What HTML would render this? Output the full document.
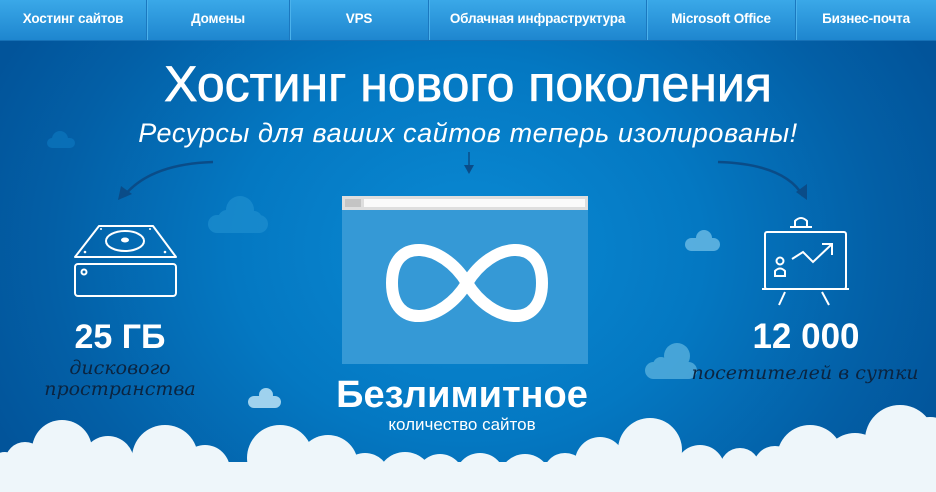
<!DOCTYPE html>
<html><head><meta charset="utf-8"><style>
*{margin:0;padding:0;box-sizing:border-box}
body{width:936px;height:492px;overflow:hidden;position:relative;font-family:"Liberation Sans","DejaVu Sans",sans-serif;
background:radial-gradient(ellipse 520px 420px at 468px 250px,#0a8ad4 0%,#0478c2 45%,#035fa6 80%,#02549a 100%);}
.nav{position:absolute;left:0;top:0;width:936px;height:41px;background:linear-gradient(#3aa8e8,#1e86cf);border-bottom:1px solid #1670b5;display:flex}
.nav div{height:40px;line-height:38px;color:#fff;font-weight:bold;font-size:13.5px;text-align:center;border-right:1px solid #1b78bf;box-shadow:1px 0 0 #4bb2ec;letter-spacing:-0.2px}
.t{position:absolute;color:#fff;text-align:center;white-space:nowrap}
.h{position:absolute;color:#0b2440;font-style:italic;font-family:"DejaVu Serif","Liberation Serif",serif;white-space:nowrap;text-align:center}
svg{position:absolute}
</style></head><body>
<div class="nav">
<div style="width:147px">Хостинг сайтов</div>
<div style="width:143px">Домены</div>
<div style="width:139px">VPS</div>
<div style="width:218px">Облачная инфраструктура</div>
<div style="width:149px">Microsoft Office</div>
<div style="width:140px;border:none;box-shadow:none">Бизнес-почта</div>
</div>
<div class="t" style="left:0;width:936px;top:54px;font-size:50px;line-height:60px;-webkit-text-stroke:0.7px #fff">Хостинг нового поколения</div>
<div class="t" style="left:0;width:936px;top:117px;font-size:27px;font-style:italic;line-height:32px;letter-spacing:0.6px">Ресурсы для ваших сайтов теперь изолированы!</div>

<svg width="936" height="492" style="left:0;top:0">
<g fill="#0d7bc3" opacity="0.6">
<circle cx="60" cy="139" r="8"/><rect x="47" y="138" width="28" height="10" rx="5"/>
</g>
<g fill="#1f8fd0" opacity="0.7">
<circle cx="240" cy="210" r="14"/><circle cx="227" cy="219" r="9"/><circle cx="254" cy="219" r="8"/><rect x="208" y="215" width="60" height="18" rx="9"/>
</g>
<g fill="#6cbce6" opacity="0.8">
<circle cx="704" cy="238" r="8"/><rect x="685" y="238" width="35" height="13" rx="6.5"/>
</g>
<g fill="#5db4e0" opacity="0.75">
<circle cx="677" cy="356" r="13"/><circle cx="661" cy="365" r="8"/><rect x="645" y="362" width="52" height="17" rx="8.5"/>
</g>
<g fill="#9fd2ee">
<circle cx="266" cy="395" r="7"/><rect x="248" y="396" width="33" height="12" rx="6"/>
</g>
<g fill="none" stroke="#0a4c88" stroke-width="2.5">
<path d="M213 162 Q150 164 124 196"/>
<path d="M718 162 Q785 164 803 196"/>
<path d="M469 152 L469 166" stroke-width="1.5"/>
</g>
<g fill="#0a4c88">
<path d="M118 200 L121 186 L132 194 Z"/>
<path d="M807 200 L796 192 L807 184 Z"/>
<path d="M464 165 L474 165 L469 174 Z"/>
</g>
<g fill="none" stroke="#fff" stroke-width="2">
<path d="M99 226 L153 226 L176 257 L75 257 Z" stroke-linejoin="round"/>
<ellipse cx="125" cy="241" rx="19" ry="10"/>
<rect x="75" y="264" width="101" height="32" rx="3"/>
<circle cx="84" cy="272" r="2.5"/>
</g>
<g fill="#fff"><ellipse cx="125" cy="240" rx="4" ry="2.5"/><circle cx="85" cy="252" r="1.3"/><circle cx="165" cy="252" r="1.3"/><circle cx="101" cy="229" r="1"/><circle cx="150" cy="229" r="1"/></g>
<g fill="none" stroke="#fff" stroke-width="2">
<path d="M795 227 L795 221 Q801 215 807 221 L807 227 M790 227 L812 227" />
<rect x="765" y="232" width="81" height="57" rx="2"/>
<path d="M762 289 L849 289 M785 292 L779 305 M822 292 L829 305"/>
<path d="M792 259 L803 252 L813 262 L832 244 M822 244 L832 244 L832 255"/>
<circle cx="780" cy="261" r="3.5"/><path d="M775 276 L775 271 Q780 266 785 271 L785 276 Z"/>
</g>
<rect x="342" y="196" width="246" height="168" fill="#3599d6"/>
<rect x="342" y="196" width="246" height="14" fill="#dedede"/>
<rect x="345" y="199" width="16" height="8" fill="#c4c4c4"/>
<rect x="364" y="199" width="221" height="8" fill="#fafafa"/>
<path d="M467 283 C492 242 542 236 542 283 C542 330 492 324 467 283 C442 242 392 236 392 283 C392 330 442 324 467 283 Z" fill="none" stroke="#fff" stroke-width="12"/>
</svg>

<div class="t" style="left:40px;width:160px;top:317px;font-size:34px;font-weight:bold;line-height:40px">25 ГБ</div>
<div class="h" style="left:20px;width:200px;top:358px;font-size:19px;line-height:21px">дискового<br>пространства</div>
<div class="t" style="left:706px;width:200px;top:317px;font-size:35px;font-weight:bold;line-height:40px">12 000</div>
<div class="h" style="left:680px;width:250px;top:362px;font-size:19px;line-height:22px">посетителей в сутки</div>
<div class="t" style="left:262px;width:400px;top:374px;font-size:38px;font-weight:bold;line-height:42px">Безлимитное</div>
<div class="t" style="left:262px;width:400px;top:414px;font-size:17px;line-height:22px">количество сайтов</div>

<svg width="936" height="492" style="left:0;top:0">
<g fill="#eef6fa">
<circle cx="5" cy="470" r="18"/><circle cx="25" cy="462" r="20"/><circle cx="62" cy="450" r="30"/><circle cx="108" cy="462" r="26"/><circle cx="165" cy="458" r="33"/><circle cx="205" cy="470" r="25"/><circle cx="280" cy="458" r="33"/><circle cx="328" cy="465" r="30"/><circle cx="365" cy="478" r="25"/><circle cx="405" cy="480" r="28"/><circle cx="440" cy="478" r="24"/><circle cx="480" cy="478" r="25"/><circle cx="525" cy="480" r="26"/><circle cx="565" cy="475" r="22"/><circle cx="600" cy="462" r="25"/><circle cx="650" cy="450" r="32"/><circle cx="700" cy="470" r="25"/><circle cx="740" cy="468" r="20"/><circle cx="775" cy="468" r="22"/><circle cx="810" cy="458" r="33"/><circle cx="855" cy="465" r="32"/><circle cx="900" cy="440" r="35"/><circle cx="930" cy="445" r="28"/>
<rect x="0" y="462" width="936" height="30"/>
</g>
</svg>
</body></html>
